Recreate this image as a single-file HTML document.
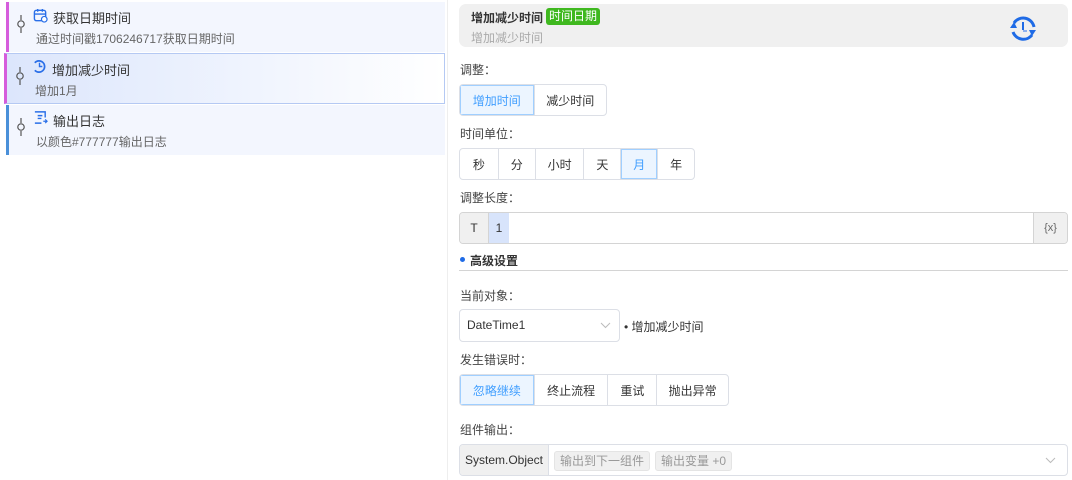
<!DOCTYPE html>
<html><head><meta charset="utf-8"><style>
*{box-sizing:border-box;margin:0;padding:0}
body{width:1072px;height:480px;background:#fff;font-family:"Liberation Sans","Noto Sans CJK SC",sans-serif;font-size:12px;color:#333;position:relative;overflow:hidden}
.a{position:absolute}
.item{position:absolute;left:6px;width:439px;height:50px;background:#f3f6fe}
.item .t{position:absolute;left:44px;top:6px;font-size:13px;color:#333}
.item .s{position:absolute;left:27px;top:28px;font-size:12px;color:#666}
.pin{position:absolute;left:8px;top:13px;width:8px;height:18px}
.grp{position:absolute;display:flex;height:32px;border:1px solid #dcdfe6;border-radius:4px;overflow:hidden;background:#fff}
.grp div{display:flex;align-items:center;justify-content:center;border-left:1px solid #dcdfe6;font-size:12px;color:#333}
.grp div:first-child{border-left:none}
.grp .on{background:#ecf5ff;color:#409eff;box-shadow:inset 0 0 0 1px #a0cfff}
.lbl{position:absolute;left:460px;font-size:12px;color:#444}
.tag{position:absolute;top:6px;height:20px;background:#f0f0f0;border:1px solid #e4e4e4;border-radius:3px;color:#999;font-size:12px;line-height:18px;padding:0 5px}
</style></head><body>
<div class="a" style="left:447px;top:0;width:1px;height:480px;background:#eee"></div>

<div class="item" style="top:2px;border-left:3px solid #d65ddc">
<svg class="pin" viewBox="0 0 8 18"><path d="M4 0V5M4 13V18" stroke="#555" stroke-width="1.2"/><circle cx="4" cy="9" r="3.2" fill="none" stroke="#555" stroke-width="1.2"/></svg>
<svg class="a" style="left:24px;top:6px" width="15" height="15" viewBox="0 0 16 16"><rect x="1.5" y="2.5" width="12" height="11" rx="2" fill="none" stroke="#2a6fe8" stroke-width="1.5"/><path d="M1.5 6.5H13.5M5 1V4M10 1V4" stroke="#2a6fe8" stroke-width="1.5"/><circle cx="12" cy="12" r="3" fill="#fff" stroke="#2a6fe8" stroke-width="1.3"/></svg>
<div class="t">获取日期时间</div><div class="s">通过时间戳1706246717获取日期时间</div></div>

<div class="item" style="top:53px;left:4px;width:441px;height:51px;border:1px solid #b5c9f3;border-left:3px solid #d65ddc;background:linear-gradient(90deg,#dce6fc,#fff)">
<svg class="pin" viewBox="0 0 8 18" style="left:9px"><path d="M4 0V5M4 13V18" stroke="#555" stroke-width="1.2"/><circle cx="4" cy="9" r="3.2" fill="none" stroke="#555" stroke-width="1.2"/></svg>
<svg class="a" style="left:25px;top:5px" width="15" height="15" viewBox="0 0 16 16"><path d="M3 4A6 6 0 1 1 3 12" fill="none" stroke="#2a6fe8" stroke-width="1.8"/><path d="M8 4V8H11" fill="none" stroke="#2a6fe8" stroke-width="1.5"/></svg>
<div class="t" style="top:6px;left:45px">增加减少时间</div><div class="s" style="top:28px;left:28px">增加1月</div></div>

<div class="item" style="top:105px;border-left:3px solid #4a90d9">
<svg class="pin" viewBox="0 0 8 18"><path d="M4 0V5M4 13V18" stroke="#555" stroke-width="1.2"/><circle cx="4" cy="9" r="3.2" fill="none" stroke="#555" stroke-width="1.2"/></svg>
<svg class="a" style="left:24px;top:5px" width="15" height="15" viewBox="0 0 16 16"><path d="M2 2H13V8M2 14H9M5 6H10M5 9H9" fill="none" stroke="#2a6fe8" stroke-width="1.5"/><path d="M11 12H15M13 10L15 12L13 14" fill="none" stroke="#2a6fe8" stroke-width="1.3"/></svg>
<div class="t">输出日志</div><div class="s">以颜色#777777输出日志</div></div>

<div class="a" style="left:459px;top:4px;width:609px;height:43px;background:#f0f0f0;border-radius:7px"></div>
<div class="a" style="left:471px;top:9px;font-size:12px;font-weight:bold;color:#333">增加减少时间</div>
<div class="a" style="left:546px;top:8px;height:17px;padding:0 3px;background:#3fb81f;color:#fff;border-radius:3px;font-size:12px;line-height:17px">时间日期</div>
<div class="a" style="left:471px;top:29px;color:#aaa;font-size:12px">增加减少时间</div>
<svg class="a" style="left:1008px;top:14px" width="30" height="30" viewBox="0 0 30 30"><path d="M6 9A11 11 0 0 1 26 13M24 21A11 11 0 0 1 5 18" fill="none" stroke="#1f6be6" stroke-width="3"/><path d="M2 14L6 8L9 14Z M28 16L24 22L21 16Z" fill="#1f6be6"/><path d="M15 8V16" stroke="#1f6be6" stroke-width="2"/><path d="M15 17H19" stroke="#8db0ee" stroke-width="2"/></svg>

<div class="lbl" style="top:61px">调整：</div>
<div class="grp" style="left:459px;top:84px;width:148px"><div class="on" style="width:74px">增加时间</div><div style="width:73px">减少时间</div></div>

<div class="lbl" style="top:125px">时间单位：</div>
<div class="grp" style="left:459px;top:148px;width:236px"><div style="width:38px">秒</div><div style="width:37px">分</div><div style="width:49px">小时</div><div style="width:37px">天</div><div class="on" style="width:37px">月</div><div style="width:37px">年</div></div>

<div class="lbl" style="top:189px">调整长度：</div>
<div class="a" style="left:459px;top:212px;width:609px;height:32px;border:1px solid #d4d4d4;border-radius:4px;overflow:hidden">
<div class="a" style="left:0;top:0;width:29px;height:30px;background:#f0f0f0;border-right:1px solid #d4d4d4;text-align:center;line-height:30px">T</div>
<div class="a" style="left:29px;top:0;width:20px;height:30px;background:#d8e4fb;text-align:center;line-height:30px">1</div>
<div class="a" style="right:0;top:0;width:34px;height:30px;background:#f0f0f0;border-left:1px solid #d4d4d4;text-align:center;line-height:30px;font-size:11px;color:#666">{x}</div></div>

<div class="a" style="left:460px;top:257px;width:5px;height:5px;border-radius:50%;background:#1f6be6"></div>
<div class="a" style="left:470px;top:252px;font-weight:bold;font-size:12px">高级设置</div>
<div class="a" style="left:459px;top:270px;width:609px;height:1px;background:#d4d4d4"></div>

<div class="lbl" style="top:287px">当前对象：</div>
<div class="a" style="left:459px;top:309px;width:161px;height:33px;border:1px solid #dcdfe6;border-radius:4px;line-height:31px;padding-left:7px;font-size:12px">DateTime1
<svg class="a" style="right:8px;top:12px" width="11" height="7" viewBox="0 0 11 7"><path d="M1 1L5.5 5.5L10 1" fill="none" stroke="#bbb"/></svg></div>
<div class="a" style="left:624px;top:318px;font-size:12px">• 增加减少时间</div>

<div class="lbl" style="top:351px">发生错误时：</div>
<div class="grp" style="left:459px;top:374px;width:270px"><div class="on" style="width:74px">忽略继续</div><div style="width:74px">终止流程</div><div style="width:49px">重试</div><div style="width:72px">抛出异常</div></div>

<div class="lbl" style="top:421px">组件输出：</div>
<div class="a" style="left:459px;top:444px;width:609px;height:32px;border:1px solid #dcdfe6;border-radius:4px;overflow:hidden">
<div class="a" style="left:0;top:0;width:89px;height:30px;background:#f0f0f0;border-right:1px solid #dcdfe6;text-align:center;line-height:30px">System.Object</div>
<div class="tag" style="left:94px">输出到下一组件</div>
<div class="tag" style="left:195px">输出变量 +0</div>
<svg class="a" style="right:11px;top:12px" width="11" height="7" viewBox="0 0 11 7"><path d="M1 1L5.5 5.5L10 1" fill="none" stroke="#bbb"/></svg></div>
</body></html>
